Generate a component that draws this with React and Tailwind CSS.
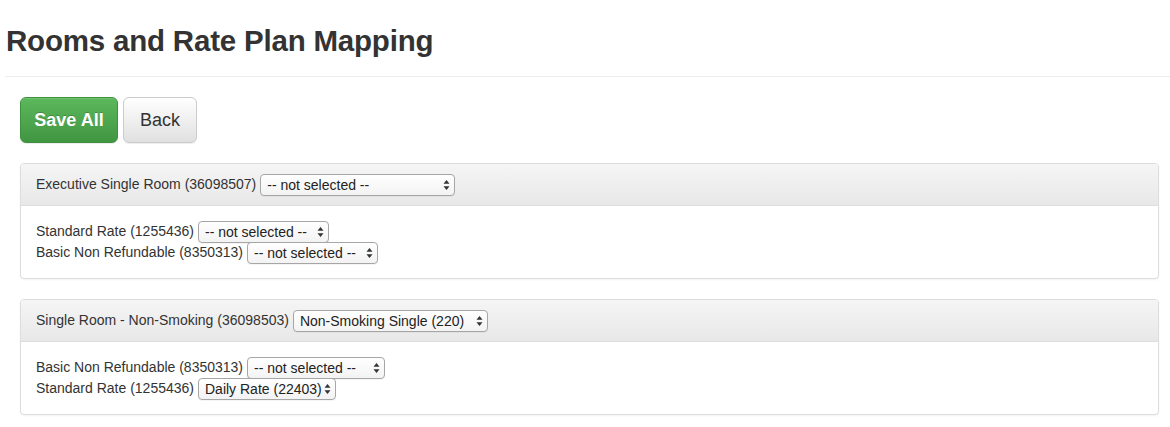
import React from 'react';

function Arrows() {
  return (
    <svg className="absolute right-[5px] top-1/2 -translate-y-1/2 pointer-events-none" width="7" height="11" viewBox="0 0 7 11">
      <path d="M3.5 0.5 L6.5 4.2 H0.5 Z" fill="#333" />
      <path d="M3.5 10.5 L6.5 6.8 H0.5 Z" fill="#333" />
    </svg>
  );
}

function Select({ value, width }) {
  return (
    <span className="relative inline-block align-middle" style={{ width }}>
      <select
        className="appearance-none w-full h-[22px] pl-[6px] pr-[12px] text-[14px] leading-[20px] text-[#222] rounded-[4px] border border-[#a6a6a6] bg-gradient-to-b from-white to-[#f3f3f3] shadow-[0_1px_0_rgba(0,0,0,0.04)] outline-none"
        defaultValue={value}
      >
        <option>{value}</option>
      </select>
      <Arrows />
    </span>
  );
}

function Panel({ room, roomSel, rates }) {
  return (
    <div className="border border-[#ddd] rounded-[4px] shadow-[0_1px_2px_rgba(0,0,0,0.05)] bg-white">
      <div className="h-[42px] px-[15px] flex items-center gap-[4px] bg-gradient-to-b from-[#f5f5f5] to-[#e8e8e8] border-b border-[#ddd] rounded-t-[3px]">
        <span>{room}</span>
        <Select value={roomSel.value} width={roomSel.width} />
      </div>
      <div className="px-[15px] pt-[15px] pb-[15px] flex flex-col">
        {rates.map((r) => (
          <div key={r.label} className="flex items-center gap-[4px] h-[21px]">
            <span>{r.label}</span>
            <Select value={r.value} width={r.width} />
          </div>
        ))}
      </div>
    </div>
  );
}

export default function App() {
  return (
    <div className="w-[1170px] h-[427px] bg-white text-[#333] text-[14px]" style={{ fontFamily: '"Liberation Sans", Arial, sans-serif' }}>
      <div className="pl-[5px]">
        <h1 className="pt-[23px] pb-[17px] pl-[1px] text-[29.5px] leading-[36px] font-bold text-[#333] tracking-[-0.2px]">
          Rooms and Rate Plan Mapping
        </h1>
        <div className="border-t border-[#eee]" />
      </div>

      <div className="px-[20px] pt-[20px]">
        <div className="flex gap-[5px]">
          <button className="h-[46px] w-[98px] text-[18px] font-bold text-white rounded-[6px] border border-[#3e8f3e] bg-gradient-to-b from-[#5cb85c] to-[#419641] shadow-[inset_0_1px_0_rgba(255,255,255,0.15),0_1px_1px_rgba(0,0,0,0.075)] [text-shadow:0_-1px_0_rgba(0,0,0,0.2)]">
            Save All
          </button>
          <button className="h-[46px] w-[74px] text-[18px] text-[#333] rounded-[6px] border border-[#ccc] bg-gradient-to-b from-white to-[#e0e0e0] shadow-[inset_0_1px_0_rgba(255,255,255,0.15),0_1px_1px_rgba(0,0,0,0.075)]">
            Back
          </button>
        </div>

        <div className="mt-[20px] w-[1139px] flex flex-col gap-[20px]">
          <Panel
            room="Executive Single Room (36098507)"
            roomSel={{ value: '-- not selected --', width: 195 }}
            rates={[
              { label: 'Standard Rate (1255436)', value: '-- not selected --', width: 131 },
              { label: 'Basic Non Refundable (8350313)', value: '-- not selected --', width: 131 },
            ]}
          />
          <Panel
            room="Single Room - Non-Smoking (36098503)"
            roomSel={{ value: 'Non-Smoking Single (220)', width: 195 }}
            rates={[
              { label: 'Basic Non Refundable (8350313)', value: '-- not selected --', width: 138 },
              { label: 'Standard Rate (1255436)', value: 'Daily Rate (22403)', width: 138 },
            ]}
          />
        </div>
      </div>
    </div>
  );
}
